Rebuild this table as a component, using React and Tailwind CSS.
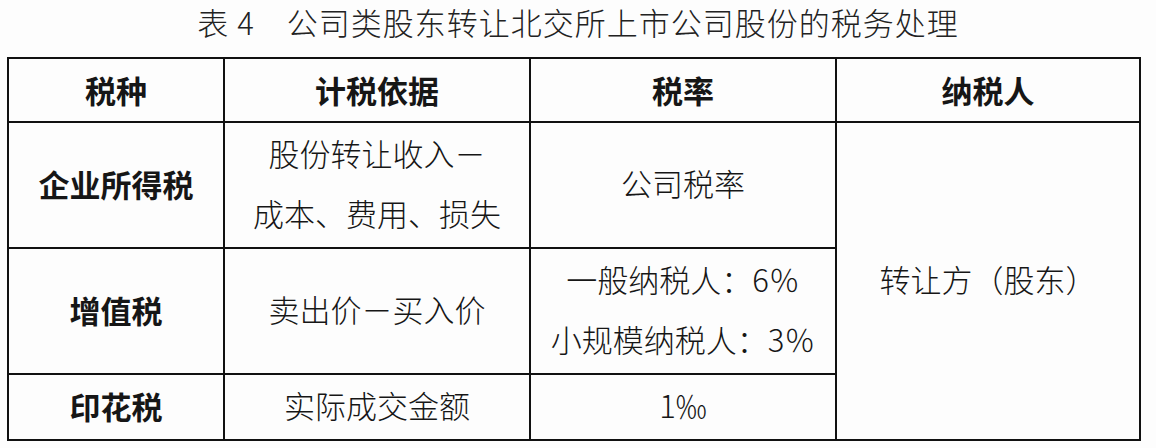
import React from "react";

const rows = [
  { name: "企业所得税", basis: ["股份转让收入－", "成本、费用、损失"], rate: ["公司税率"], h: "h-[126px]" },
  { name: "增值税", basis: ["卖出价－买入价"], rate: ["一般纳税人：6％", "小规模纳税人：3％"], h: "h-[126px]" },
  { name: "印花税", basis: ["实际成交金额"], rate: ["1‰"], h: "h-[64px]" },
];

export default function App() {
  return (
    <div
      className="w-[1156px] h-[448px] bg-[#fdfdfd] text-[#161616] overflow-hidden"
      style={{ fontFamily: '"Noto Sans CJK SC", "Noto Sans", sans-serif' }}
    >
      {/* Caption */}
      <div className="h-[57px] text-center text-[31px] leading-[44px] tracking-[1px] font-light text-[#222]">
        表 4　公司类股东转让北交所上市公司股份的税务处理
      </div>

      <div className="pl-[7px]">
        <table className="border-collapse border-2 border-[#111] table-fixed w-[1134px]">
          <colgroup>
            <col className="w-[216px]" />
            <col className="w-[306px]" />
            <col className="w-[306px]" />
            <col />
          </colgroup>
          <thead>
            <tr className="h-[64px]">
              {["税种", "计税依据", "税率", "纳税人"].map((t) => (
                <th
                  key={t}
                  className="border-2 border-[#111] text-[31px] font-bold leading-[40px] text-center align-middle p-0"
                >
                  {t}
                </th>
              ))}
            </tr>
          </thead>
          <tbody>
            {rows.map((r, i) => (
              <tr key={r.name} className={r.h}>
                <td className="border-2 border-[#111] text-[31px] font-bold text-center align-middle p-0 pb-[2px]">
                  {r.name}
                </td>
                <td className="border-2 border-[#111] text-[31px] font-light text-center align-middle p-0 pb-[4px] leading-[60px]">
                  {r.basis.map((l) => (
                    <div key={l}>{l}</div>
                  ))}
                </td>
                <td className="border-2 border-[#111] text-[31px] font-light text-center align-middle p-0 pb-[4px] leading-[60px]">
                  {r.rate.map((l) => (
                    <div key={l}>{l}</div>
                  ))}
                </td>
                {i === 0 && (
                  <td
                    rowSpan={3}
                    className="border-2 border-[#111] text-[31px] font-light text-center align-middle p-0 pb-[4px]"
                  >
                    转让方（股东）
                  </td>
                )}
              </tr>
            ))}
          </tbody>
        </table>
      </div>
    </div>
  );
}
